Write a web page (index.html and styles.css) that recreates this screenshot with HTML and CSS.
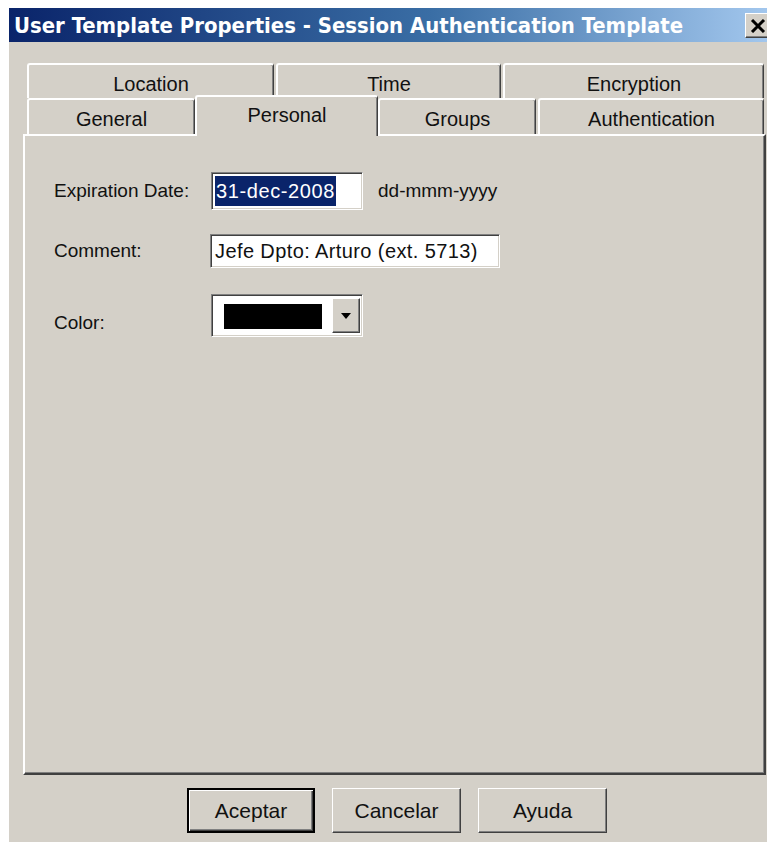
FILE: index.html
```html
<!DOCTYPE html>
<html lang="es">
<head>
<meta charset="utf-8">
<title>User Template Properties</title>
<link rel="stylesheet" href="styles.css">
</head>
<body>
<div class="window">
  <div class="titlebar">
    <span class="title">User Template Properties - Session Authentication Template</span>
    <button class="close" type="button" aria-label="Close">
      <svg width="16" height="14" viewBox="0 0 16 14"><path d="M2 1 L14 13 M14 1 L2 13" stroke="#000" stroke-width="3" fill="none"/></svg>
    </button>
  </div>
  <div class="client">
    <div class="tabs">
      <div class="tab-row back">
        <div class="tab t-location">Location</div>
        <div class="tab t-time">Time</div>
        <div class="tab t-encryption">Encryption</div>
      </div>
      <div class="tab-row front">
        <div class="tab t-general">General</div>
        <div class="tab t-personal selected">Personal</div>
        <div class="tab t-groups">Groups</div>
        <div class="tab t-auth">Authentication</div>
      </div>
    </div>
    <div class="panel">
      <div class="field row-date">
        <span class="label">Expiration Date:</span>
        <div class="input date-input"><span class="sel">31-dec-2008</span></div>
        <span class="hint">dd-mmm-yyyy</span>
      </div>
      <div class="field row-comment">
        <span class="label">Comment:</span>
        <div class="input comment-input">Jefe Dpto: Arturo (ext. 5713)</div>
      </div>
      <div class="field row-color">
        <span class="label color-label">Color:</span>
        <div class="combo">
          <span class="swatch"></span>
          <span class="drop">
            <svg width="10" height="6" viewBox="0 0 10 6"><path d="M0 0 H10 L5 6 Z" fill="#000"/></svg>
          </span>
        </div>
      </div>
    </div>
    <div class="buttons">
      <button class="btn default" type="button">Aceptar</button>
      <button class="btn" type="button">Cancelar</button>
      <button class="btn" type="button">Ayuda</button>
    </div>
  </div>
</div>
</body>
</html>
```

FILE: styles.css
```css
html, body {
  margin: 0;
  padding: 0;
  background: #ffffff;
  overflow: hidden;
}

.window {
  margin: 8px 0 0 9px;
  width: 770px;
  height: 834px;
  background: #d4d0c8;
  font-family: "Liberation Sans", Arial, sans-serif;
  color: #111;
}

/* caption bar */
.titlebar {
  height: 34px;
  display: flex;
  align-items: center;
  background: linear-gradient(to right, #0a246a 0%, #3a6ea5 55%, #a6caf0 100%);
  padding-left: 5px;
  box-sizing: border-box;
}

.title {
  flex: 1;
  color: #ffffff;
  font-family: "DejaVu Sans Condensed", "Liberation Sans", sans-serif;
  font-weight: bold;
  font-size: 21.9px;
  white-space: nowrap;
}

.close {
  width: 26px;
  height: 25px;
  margin: 1px 8px 0 0;
  padding: 0 0 0 4px;
  display: flex;
  align-items: center;
  justify-content: flex-start;
  background: #d4d0c8;
  border: 1px solid;
  border-color: #ffffff #404040 #404040 #ffffff;
  box-shadow: inset -1px -1px #808080;
}

/* dialog client area */
.client {
  padding: 21px 0 0 14px;
}

.tabs {
  padding-left: 4px;
}

.tab-row {
  display: flex;
}

.tab {
  box-sizing: border-box;
  height: 35px;
  padding-top: 8px;
  line-height: 22px;
  font-size: 20px;
  text-align: center;
  background: #d4d0c8;
  border-top: 2px solid #ffffff;
  border-left: 2px solid #ffffff;
  border-right: 1px solid #404040;
  box-shadow: inset -1px 0 #808080;
  border-radius: 3px 3px 0 0;
}

.back .tab { margin-right: 2px; }
.t-location { width: 247px; }
.t-time { width: 225px; }
.t-encryption { width: 261px; }

.front {
  height: 36px;
  align-items: flex-end;
}

.front .tab { height: 36px; }
.t-general { width: 168px; }
.t-personal { width: 183px; }
.t-groups { width: 158px; margin-right: 2px; }
.t-auth { width: 226px; }

.tab.selected {
  position: relative;
  z-index: 2;
  height: 41px;
  margin-bottom: -2px;
  padding-top: 7px;
}

/* page body */
.panel {
  box-sizing: border-box;
  width: 743px;
  height: 641px;
  padding: 36px 0 0 29px;
  border: 2px solid;
  border-color: #ffffff #404040 #404040 #ffffff;
  box-shadow: inset -1px -1px #808080;
}

.field {
  display: flex;
  align-items: center;
  font-size: 19px;
}

.row-comment { margin-top: 24px; }
.row-color { margin-top: 26px; }

.label {
  width: 157px;
  flex: none;
}

.color-label { padding-top: 15px; }

.input {
  box-sizing: border-box;
  background: #ffffff;
  border: 1px solid;
  border-color: #808080 #ffffff #ffffff #808080;
  box-shadow: inset 1px 1px #404040, inset -1px -1px #d4d0c8;
  font-size: 20px;
  display: flex;
  align-items: center;
}

.date-input {
  width: 152px;
  height: 38px;
  padding-left: 3px;
}

.sel {
  background: #0a246a;
  color: #ffffff;
  line-height: 30px;
  padding: 0 1px;
  letter-spacing: 0.6px;
}

.hint {
  margin-left: 15px;
}

.comment-input {
  width: 290px;
  height: 34px;
  margin-left: -1px;
  padding-left: 4px;
  letter-spacing: 0.4px;
}

.combo {
  box-sizing: border-box;
  width: 152px;
  height: 43px;
  background: #ffffff;
  border: 1px solid;
  border-color: #808080 #ffffff #ffffff #808080;
  box-shadow: inset 1px 1px #404040, inset -1px -1px #d4d0c8;
  display: flex;
  align-items: center;
  padding: 0 2px 0 12px;
}

.swatch {
  width: 98px;
  height: 25px;
  background: #000000;
  margin-top: 2px;
}

.drop {
  box-sizing: border-box;
  margin-left: auto;
  width: 28px;
  height: 35px;
  background: #d4d0c8;
  border: 1px solid;
  border-color: #ffffff #404040 #404040 #ffffff;
  box-shadow: inset -1px -1px #808080;
  display: flex;
  align-items: center;
  justify-content: center;
}

/* command buttons */
.buttons {
  display: flex;
  gap: 17px;
  padding: 13px 0 0 164px;
}

.btn {
  box-sizing: border-box;
  width: 129px;
  height: 45px;
  margin: 0;
  background: #d4d0c8;
  border: 1px solid;
  border-color: #ffffff #404040 #404040 #ffffff;
  box-shadow: inset -1px -1px #808080;
  font-family: "Liberation Sans", Arial, sans-serif;
  font-size: 21px;
  color: #111;
  padding: 0;
}

.btn.default {
  width: 128px;
  border: 2px solid #000000;
  box-shadow: inset 1px 1px #ffffff, inset -1px -1px #404040, inset -2px -2px #808080;
}
```
